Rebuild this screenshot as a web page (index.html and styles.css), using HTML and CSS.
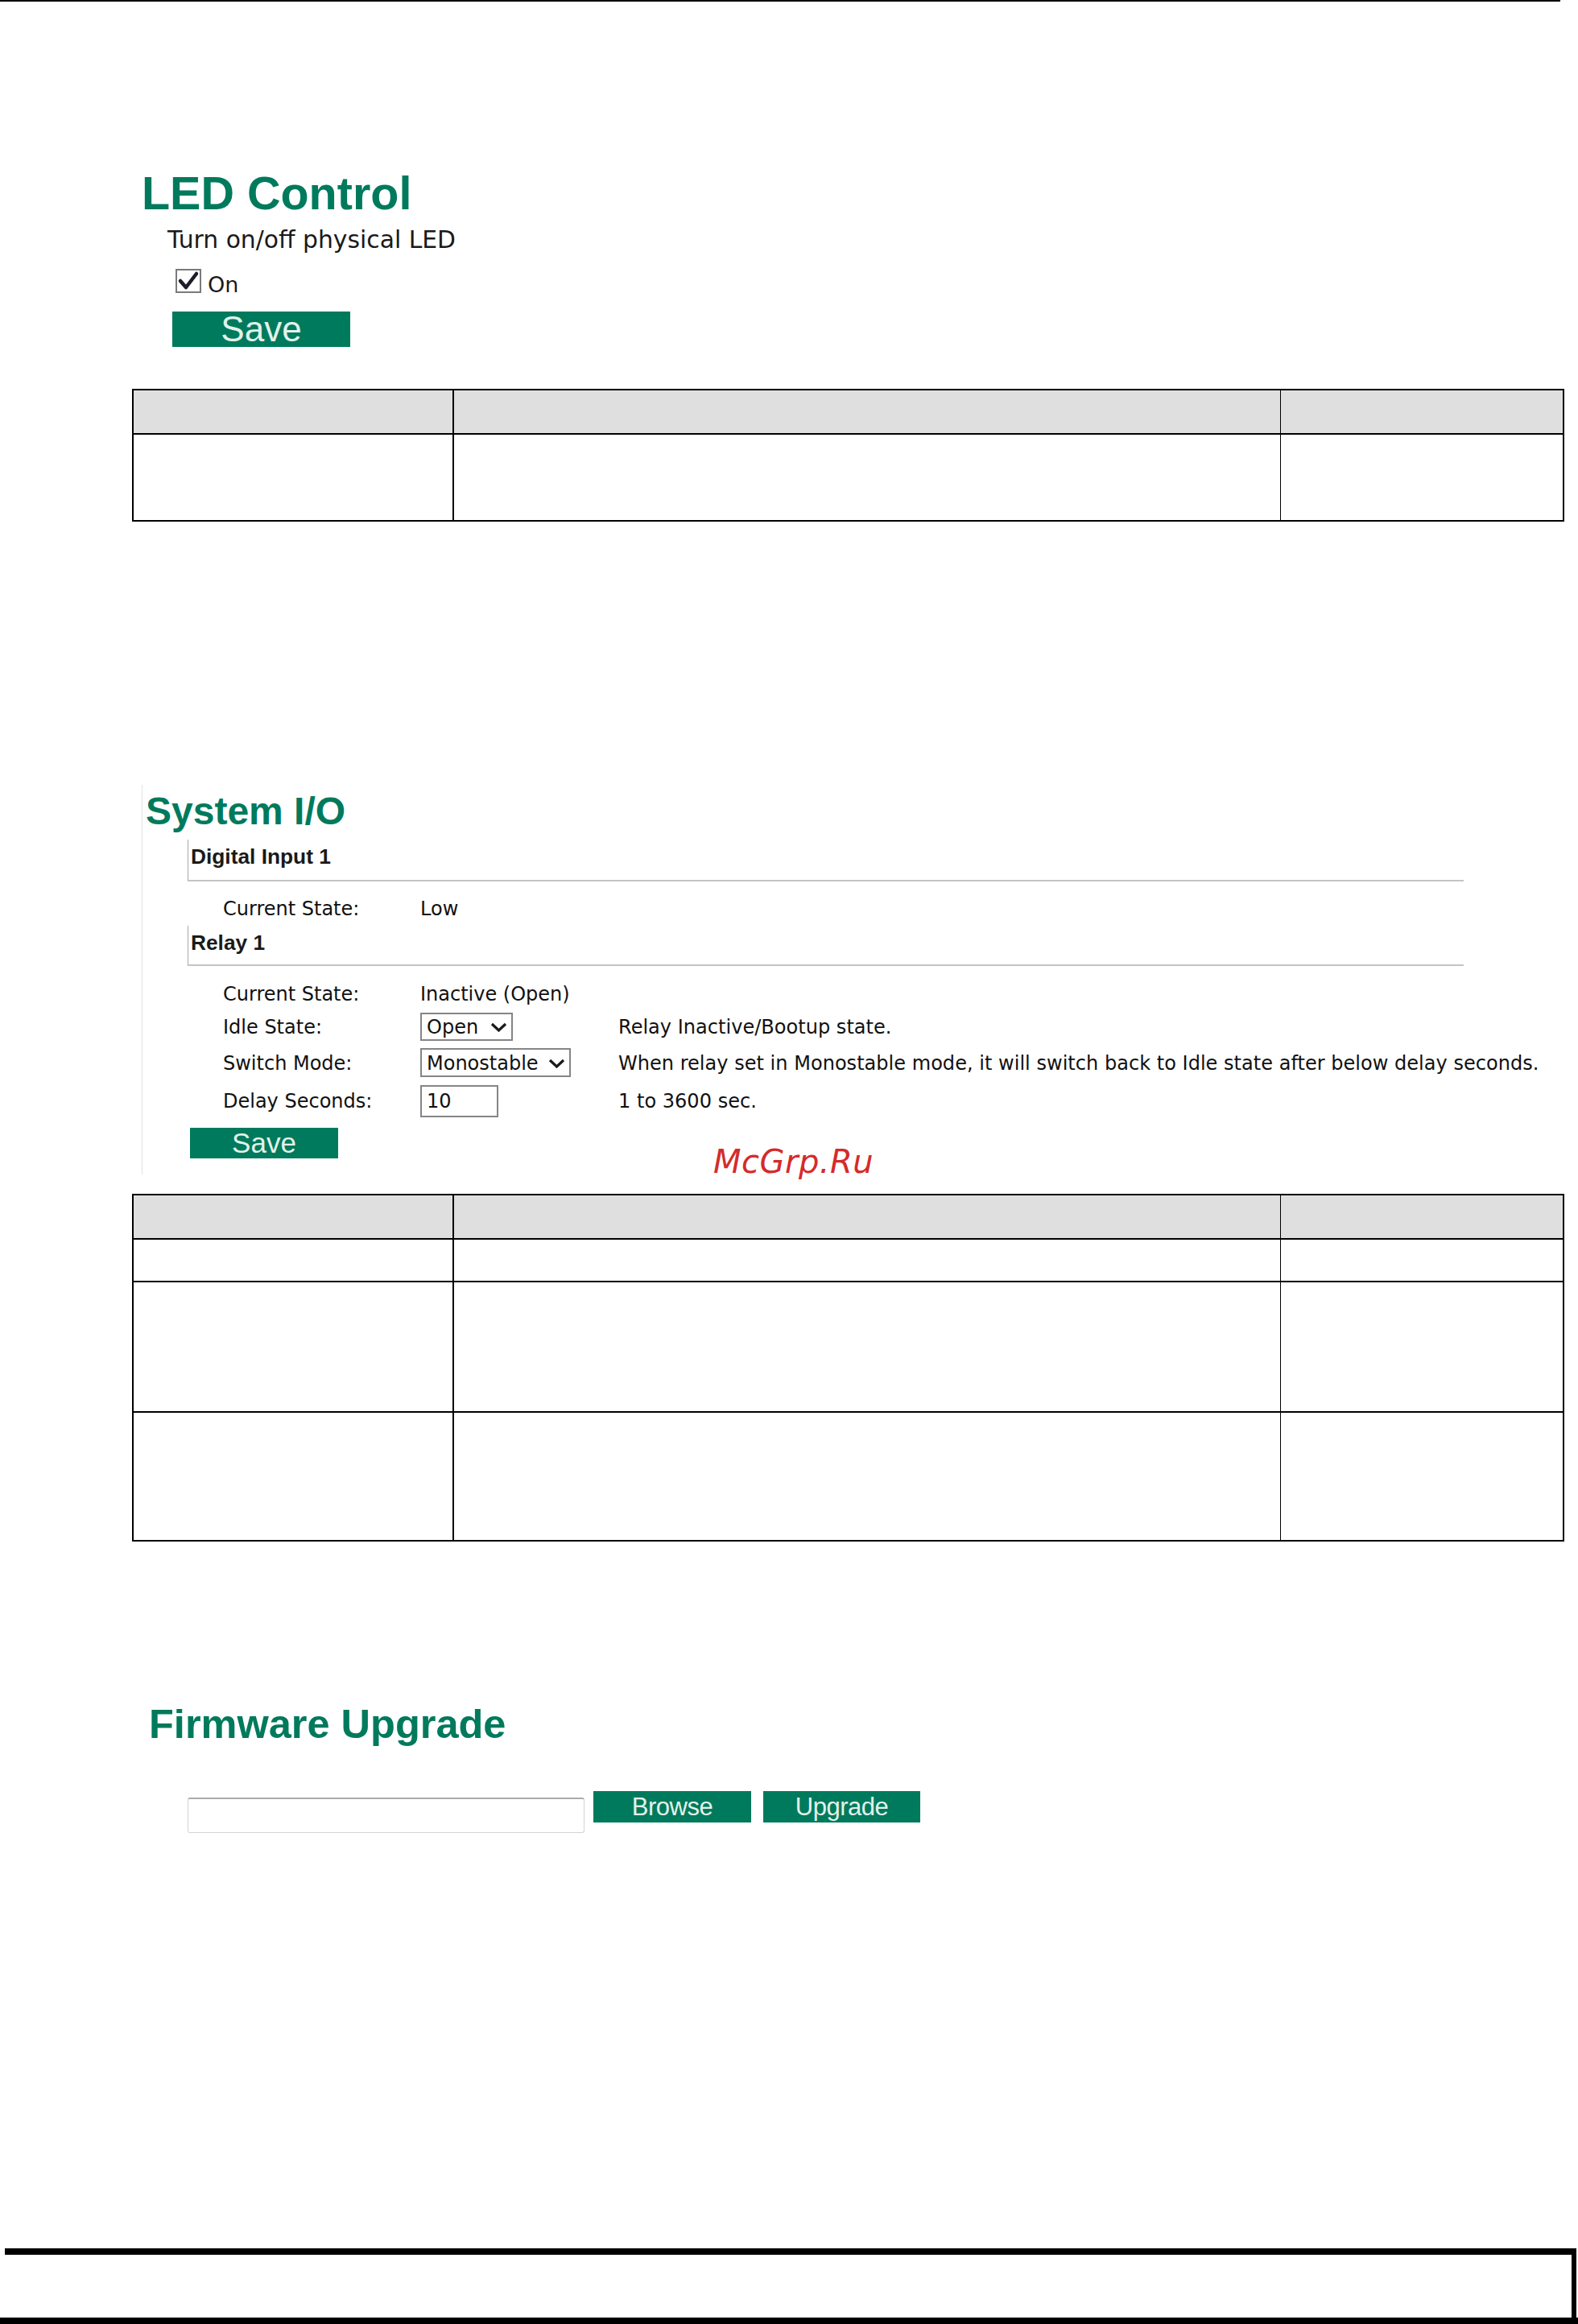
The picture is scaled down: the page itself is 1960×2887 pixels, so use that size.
FILE: index.html
```html
<!DOCTYPE html>
<html lang="en">
<head>
<meta charset="utf-8">
<title>LED Control / System I/O / Firmware Upgrade</title>
<link rel="stylesheet" href="styles.css">
</head>
<body>
<div class="topline"></div>

<section class="led">
  <h1 class="title led-title">LED Control</h1>
  <p class="led-desc">Turn on/off physical LED</p>
  <div class="check-row">
    <span class="checkbox"><svg class="tick" viewBox="0 0 28 26" width="28" height="26"><polyline points="4,13 11,21 24,4" fill="none" stroke="#1c1c2a" stroke-width="4.5" stroke-linecap="round" stroke-linejoin="round"/></svg></span>
    <span class="check-label">On</span>
  </div>
  <button class="btn btn-led">Save</button>
</section>

<div class="tbl tbl1">
  <div class="cell head c1"></div><div class="cell head c2"></div><div class="cell head c3"></div>
  <div class="cell c1"></div><div class="cell c2"></div><div class="cell c3"></div>
</div>

<section class="sysio">
  <h1 class="title sys-title">System I/O</h1>
  <div class="group">Digital Input 1</div>
  <div class="row row-di"><span class="lbl">Current State:</span><span class="val">Low</span></div>
  <div class="group group-relay">Relay 1</div>
  <div class="row row-cur"><span class="lbl">Current State:</span><span class="val">Inactive (Open)</span></div>
  <div class="row row-idle">
    <span class="lbl">Idle State:</span>
    <span class="ctl"><span class="sel sel-open"><span>Open</span><svg class="chev" viewBox="0 0 21 12" width="21" height="12"><polyline points="2,2 10.5,10 19,2" fill="none" stroke="#1a1a1a" stroke-width="3.2"/></svg></span></span>
    <span class="desc">Relay Inactive/Bootup state.</span>
  </div>
  <div class="row row-mode">
    <span class="lbl">Switch Mode:</span>
    <span class="ctl"><span class="sel sel-mode"><span>Monostable</span><svg class="chev" viewBox="0 0 21 12" width="21" height="12"><polyline points="2,2 10.5,10 19,2" fill="none" stroke="#1a1a1a" stroke-width="3.2"/></svg></span></span>
    <span class="desc">When relay set in Monostable mode, it will switch back to Idle state after below delay seconds.</span>
  </div>
  <div class="row row-delay">
    <span class="lbl">Delay Seconds:</span>
    <span class="ctl"><span class="inp">10</span></span>
    <span class="desc">1 to 3600 sec.</span>
  </div>
  <button class="btn btn-sys">Save</button>
</section>

<div class="wm">McGrp.Ru</div>

<div class="tbl tbl2">
  <div class="cell head c1"></div><div class="cell head c2"></div><div class="cell head c3"></div>
  <div class="cell c1"></div><div class="cell c2"></div><div class="cell c3"></div>
  <div class="cell c1"></div><div class="cell c2"></div><div class="cell c3"></div>
  <div class="cell c1"></div><div class="cell c2"></div><div class="cell c3"></div>
</div>

<section class="fw">
  <h1 class="title fw-title">Firmware Upgrade</h1>
  <div class="fw-row">
    <span class="file"></span>
    <button class="btn btn-fw btn-browse">Browse</button>
    <button class="btn btn-fw btn-upgrade">Upgrade</button>
  </div>
</section>

<footer class="footer">
  <div class="footer-box"></div>
  <div class="footer-bar"></div>
</footer>
</body>
</html>
```

FILE: styles.css
```css
html, body {
  margin: 0;
  padding: 0;
}
body {
  width: 1960px;
  height: 2887px;
  position: relative;
  overflow: hidden;
  background: #ffffff;
  font-family: "DejaVu Sans", Verdana, sans-serif;
  color: #111111;
}

.topline {
  width: 1938px;
  height: 2px;
  background: #000000;
}

.title {
  margin: 0;
  font-family: "Liberation Sans", Arial, sans-serif;
  font-weight: bold;
  color: #007a5c;
}

/* LED Control */
.led {
  margin-top: 203px;
  padding-left: 176px;
}
.led-title {
  font-size: 57.5px;
  line-height: 70px;
}
.led-desc {
  margin: 5px 0 0 32px;
  font-size: 29.8px;
  line-height: 36px;
  color: #1a1a1a;
}
.check-row {
  display: flex;
  align-items: flex-start;
  margin: 18px 0 0 42px;
  height: 35px;
}
.checkbox {
  box-sizing: border-box;
  width: 32px;
  height: 30px;
  border: 2px solid #7a7a7a;
  background: #ffffff;
  display: block;
}
.tick {
  display: block;
}
.check-label {
  margin: 4px 0 0 8px;
  font-size: 27px;
  line-height: 31px;
  color: #1a1a1a;
}

.btn {
  display: block;
  border: 0;
  padding: 0;
  margin: 0;
  background: #007a5c;
  color: #e2f2eb;
  font-family: "Liberation Sans", Arial, sans-serif;
  font-weight: normal;
  text-align: center;
}
.btn-led {
  margin: 18px 0 0 38px;
  width: 221px;
  height: 44px;
  font-size: 44px;
  line-height: 44px;
}

/* tables */
.tbl {
  display: grid;
  box-sizing: border-box;
  margin-left: 164px;
  width: 1779px;
  border-top: 2px solid #000000;
  border-left: 2px solid #000000;
  grid-template-columns: 398px 1027px 352px;
}
.tbl1 {
  margin-top: 52px;
  grid-template-rows: 55px 108px;
}
.tbl2 {
  margin-top: 24px;
  grid-template-rows: 55px 53px 162px 160px;
}
.cell {
  box-sizing: border-box;
  border-bottom: 2px solid #000000;
  border-right: 1px solid #000000;
}
.c1 {
  border-right-width: 2px;
}
.c3 {
  border-right-width: 2px;
}
.head {
  background: #dfdfdf;
}

/* System I/O */
.sysio {
  margin: 327px 0 0 176px;
  border-left: 1px solid #e2e2e2;
  padding: 5px 0 20px 0;
}
.sys-title {
  font-size: 48px;
  line-height: 56px;
  padding-left: 4px;
}
.group {
  box-sizing: border-box;
  margin: 7px 0 0 56px;
  width: 1585px;
  border-left: 1px solid #a8a8a8;
  border-bottom: 2px solid #c4c4c4;
  padding: 6px 0 14px 3px;
  font-family: "Liberation Sans", Arial, sans-serif;
  font-weight: bold;
  font-size: 26.3px;
  line-height: 30px;
  color: #1a1a1a;
}
.group-relay {
  padding-bottom: 12px;
}
.row {
  display: flex;
  align-items: baseline;
  margin-left: 100px;
  font-size: 24px;
  line-height: 28px;
  color: #111111;
}
.lbl {
  flex: none;
  width: 245px;
}
.ctl {
  flex: none;
  width: 246px;
  display: flex;
}
.desc {
  white-space: nowrap;
  letter-spacing: 0.03px;
}
.row-di { margin-top: 20px; }
.row-cur { margin-top: 21px; }
.row-idle { margin-top: 9px; }
.row-mode { margin-top: 9px; }
.row-delay { margin-top: 10px; }

.sel {
  box-sizing: border-box;
  display: flex;
  align-items: center;
  justify-content: space-between;
  height: 35px;
  border: 2px solid #858585;
  padding: 1px 5px 0 6px;
  line-height: 30px;
  background: #ffffff;
}
.sel-open { width: 115px; }
.sel-mode { width: 187px; height: 36px; }
.chev {
  display: block;
  flex: none;
}
.inp {
  box-sizing: border-box;
  display: block;
  width: 97px;
  height: 40px;
  border: 2px solid #858585;
  padding-left: 6px;
  line-height: 36px;
  background: #ffffff;
}
.btn-sys {
  margin: 13px 0 0 59px;
  width: 184px;
  height: 38px;
  font-size: 35px;
  line-height: 38px;
}

/* watermark overlay */
.wm {
  position: absolute;
  left: 886px;
  top: 1423px;
  font-family: "DejaVu Sans", Verdana, sans-serif;
  font-style: italic;
  font-size: 40px;
  line-height: 40px;
  letter-spacing: 0.5px;
  color: #d42b2b;
}

/* Firmware */
.fw {
  margin-top: 197px;
  padding-left: 185px;
}
.fw-title {
  font-size: 50.5px;
  line-height: 60px;
}
.fw-row {
  display: flex;
  align-items: flex-start;
  margin: 53px 0 0 48px;
}
.file {
  box-sizing: border-box;
  display: block;
  width: 493px;
  height: 44px;
  margin-top: 8px;
  border: 1px solid #d4d4d4;
  border-top: 2px solid #ababab;
  border-radius: 3px;
  background: #ffffff;
}
.btn-fw {
  width: 196px;
  height: 39px;
  font-size: 31px;
  line-height: 39px;
  letter-spacing: -0.5px;
}
.btn-browse { margin-left: 11px; }
.btn-upgrade { margin-left: 15px; width: 195px; }

/* footer */
.footer {
  margin-top: 516px;
}
.footer-box {
  box-sizing: border-box;
  margin-left: 6px;
  width: 1952px;
  height: 86px;
  border-top: 8px solid #000000;
  border-right: 6px solid #000000;
}
.footer-bar {
  height: 8px;
  background: #000000;
}
```
